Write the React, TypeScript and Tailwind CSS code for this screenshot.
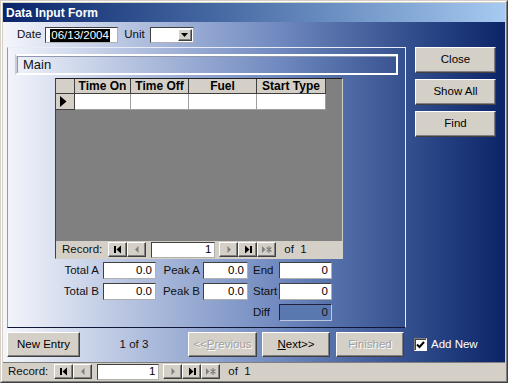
import React from "react";

const btn =
  "flex items-center justify-center bg-[#d4d0c8] border border-t-white border-l-white border-r-[#404040] border-b-[#404040] shadow-[inset_-1px_-1px_0_#808080] text-[11.5px]";
const field =
  "bg-white border border-t-[#404040] border-l-[#404040] border-r-[#b0b0b0] border-b-[#b0b0b0] text-right text-[11.5px] leading-none pr-[3px] flex items-center justify-end";

function Glyph({ kind, on }: { kind: "first" | "prev" | "next" | "last" | "new"; on: boolean }) {
  const c = on ? "#000" : "#808080";
  return (
    <svg width="12" height="9" viewBox="0 0 12 9">
      {kind === "first" && (
        <>
          <rect x="2" y="1" width="2" height="7" fill={c} />
          <polygon points="9,0.5 9,8.5 4.5,4.5" fill={c} />
        </>
      )}
      {kind === "prev" && <polygon points="7.5,1 7.5,8 4,4.5" fill={c} />}
      {kind === "next" && <polygon points="4.5,1 4.5,8 8,4.5" fill={c} />}
      {kind === "last" && (
        <>
          <polygon points="3,0.5 3,8.5 7.5,4.5" fill={c} />
          <rect x="8" y="1" width="2" height="7" fill={c} />
        </>
      )}
      {kind === "new" && (
        <>
          <polygon points="1,1 1,8 4.5,4.5" fill={c} />
          <path d="M8 1v7M5.5 2.5l5 4M10.5 2.5l-5 4" stroke={c} strokeWidth="1.2" />
        </>
      )}
    </svg>
  );
}

function NavBtn({ kind, on }: { kind: "first" | "prev" | "next" | "last" | "new"; on: boolean }) {
  return (
    <div className={`${btn} w-[19px] h-[15px]`}>
      <Glyph kind={kind} on={on} />
    </div>
  );
}

function RecordNav({ inputW, className }: { inputW: string; className: string }) {
  return (
    <div className={`flex items-center bg-[#d4d0c8] text-[11.5px] ${className}`}>
      <span className="mr-[6px]">Record:</span>
      <NavBtn kind="first" on />
      <NavBtn kind="prev" on={false} />
      <div className={`${field} ${inputW} h-[16px] ml-[5px] mr-[4px] text-black`}>1</div>
      <NavBtn kind="next" on={false} />
      <NavBtn kind="last" on />
      <NavBtn kind="new" on={false} />
      <span className="ml-[8px]">of&nbsp; 1</span>
    </div>
  );
}

function TotalRow({
  l1,
  v1,
  l2,
  v2,
  l3,
  v3,
  sunk,
}: {
  l1: string;
  v1: string;
  l2: string;
  v2: string;
  l3: string;
  v3: string;
  sunk?: boolean;
}) {
  return (
    <div className="flex items-center h-[17px] text-[11.5px]">
      <span className="w-[44px] text-right text-[#101010]">{l1}</span>
      {v1 ? (
        <div className={`${field} w-[53px] h-[17px] ml-[4px] text-black`}>{v1}</div>
      ) : (
        <div className="w-[53px] ml-[4px]" />
      )}
      <span className="w-[44px] text-right text-[#101010]">{l2}</span>
      {v2 ? (
        <div className={`${field} w-[45px] h-[17px] ml-[3px] text-black`}>{v2}</div>
      ) : (
        <div className="w-[45px] ml-[3px]" />
      )}
      <span className="w-[31px] pl-[5px] text-[#101010] whitespace-nowrap">{l3}</span>
      <div
        className={
          sunk
            ? "border border-t-[#202040] border-l-[#202040] border-r-[#c0c8e0] border-b-[#c0c8e0] bg-[#5a78b0] w-[53px] h-[17px] text-right pr-[3px] leading-[15px] text-[#101010]"
            : `${field} w-[53px] h-[17px] text-black`
        }
      >
        {v3}
      </div>
    </div>
  );
}

export default function App() {
  const cols = [
    { t: "Time On", w: "w-[56px]" },
    { t: "Time Off", w: "w-[58px]" },
    { t: "Fuel", w: "w-[68px]" },
    { t: "Start Type", w: "w-[69px]" },
  ];

  return (
    <div className="w-[508px] h-[383px] font-['Liberation_Sans',Arial,sans-serif] bg-[#d4d0c8] border border-t-[#d4d0c8] border-l-[#d4d0c8] border-r-[#404040] border-b-[#404040]">
      <div className="w-full h-full flex flex-col border border-t-white border-l-white border-r-[#808080] border-b-[#808080] p-px">
        {/* title bar */}
        <div className="h-[19px] shrink-0 flex items-center pl-[3px] bg-linear-to-r from-[#0a246a] to-[#a6caf0] text-white font-bold text-[12px]">
          Data Input Form
        </div>

        {/* form body */}
        <div className="h-[340px] shrink-0 flex flex-col bg-linear-to-r from-[#f5f6fb] via-[#7089bf] via-55% to-[#0b2468] text-[11.5px]">
          <div className="flex items-center h-[16px] mt-[5px] pl-[14px]">
            <span className="text-[#101010]">Date</span>
            <div className="ml-[4px] w-[73px] h-[16px] bg-white border border-t-[#404040] border-l-[#404040] border-r-[#b0b0b0] border-b-[#b0b0b0] flex items-center pl-[4px]">
              <span className="bg-black text-white px-px leading-[13px]">06/13/2004</span>
            </div>
            <span className="ml-[6px] text-[#101010]">Unit</span>
            <div className="ml-[5px] w-[44px] h-[16px] bg-white border border-t-[#404040] border-l-[#404040] border-r-[#b0b0b0] border-b-[#b0b0b0] flex items-center justify-end pr-px">
              <div className={`${btn} w-[14px] h-[12px]`}>
                <svg width="7" height="4" viewBox="0 0 7 4">
                  <polygon points="0,0 7,0 3.5,4" fill="#000" />
                </svg>
              </div>
            </div>
          </div>

          <div className="flex mt-[4px] ml-[4px]">
            {/* main frame */}
            <div className="w-[399px] h-[281px] border border-t-[#e8ecf6] border-l-[#9a9a9a] border-r-[#e8ecf6] border-b-[#10183a] flex flex-col">
              <div className="ml-[7px] mt-[6px] w-[383px] h-[21px] border-2 border-t-white border-l-[#c8ccd8] border-r-white border-b-white shadow-[inset_1px_1px_0_#9098b0] flex items-center pl-[6px] text-[13px] text-[#101010]">
                Main
              </div>

              {/* datasheet */}
              <div className="ml-[47px] mt-[3px] w-[288px] h-[181px] bg-[#808080] border border-t-[#202020] border-l-[#404040] border-r-[#d4d0c8] border-b-[#d4d0c8] flex flex-col">
                <div className="flex h-[15px] font-bold text-[12px] leading-none">
                  <div className="w-[19px] bg-[#d4d0c8] border-r border-b border-[#404040]" />
                  {cols.map((c) => (
                    <div
                      key={c.t}
                      className={`${c.w} bg-[#d4d0c8] border-r border-b border-[#404040] flex items-center justify-center`}
                    >
                      {c.t}
                    </div>
                  ))}
                </div>
                <div className="flex h-[16px]">
                  <div className="w-[19px] bg-[#d4d0c8] border-r border-b border-[#404040] flex items-center pl-[4px]">
                    <svg width="7" height="11" viewBox="0 0 7 11">
                      <polygon points="0,0 0,11 6.5,5.5" fill="#000" />
                    </svg>
                  </div>
                  {cols.map((c) => (
                    <div key={c.t} className={`${c.w} bg-white border-r border-b border-[#a0a0a0]`} />
                  ))}
                </div>
                <div className="flex-1" />
                <RecordNav inputW="w-[64px]" className="h-[17px] pl-[6px] text-[#101010]" />
              </div>

              <div className="ml-[47px] mt-[3px] flex flex-col gap-[4px]">
                <TotalRow l1="Total A" v1="0.0" l2="Peak A" v2="0.0" l3="End" v3="0" />
                <TotalRow l1="Total B" v1="0.0" l2="Peak B" v2="0.0" l3="Start" v3="0" />
                <TotalRow l1="" v1="" l2="" v2="" l3="Diff" v3="0" sunk />
              </div>
            </div>

            {/* right buttons */}
            <div className="ml-[9px] flex flex-col gap-[6px]">
              <div className={`${btn} w-[81px] h-[26px] text-black`}>Close</div>
              <div className={`${btn} w-[81px] h-[26px] text-black`}>Show All</div>
              <div className={`${btn} w-[81px] h-[26px] text-black`}>Find</div>
            </div>
          </div>

          {/* bottom buttons */}
          <div className="flex items-center mt-[4px] ml-[4px] h-[25px]">
            <div className={`${btn} w-[73px] h-[25px] text-black`}>New Entry</div>
            <div className="w-[108px] text-center text-[#101010]">1 of 3</div>
            <div className={`${btn} w-[69px] h-[25px] text-[#a0a0a0] [text-shadow:1px_1px_0_#fff]`}>
              &lt;&lt;<span className="underline">P</span>revious
            </div>
            <div className={`${btn} w-[68px] h-[25px] ml-[5px] text-black`}>
              <span className="underline">N</span>ext&gt;&gt;
            </div>
            <div className={`${btn} w-[68px] h-[25px] ml-[6px] text-[#a0a0a0] [text-shadow:1px_1px_0_#fff]`}>
              Finished
            </div>
            <div className="ml-[10px] w-[13px] h-[13px] bg-white border border-t-[#808080] border-l-[#808080] border-r-white border-b-white shadow-[inset_1px_1px_0_#404040] flex items-center justify-center">
              <svg width="9" height="8" viewBox="0 0 9 8">
                <path d="M1 3.5l2.5 2.5L8 1" stroke="#000" strokeWidth="2" fill="none" />
              </svg>
            </div>
            <span className="ml-[4px] text-white">Add New</span>
          </div>
        </div>

        {/* form record navigator */}
        <RecordNav inputW="w-[62px]" className="h-[18px] pl-[5px] border-t border-[#808080] text-[#101010]" />
      </div>
    </div>
  );
}
